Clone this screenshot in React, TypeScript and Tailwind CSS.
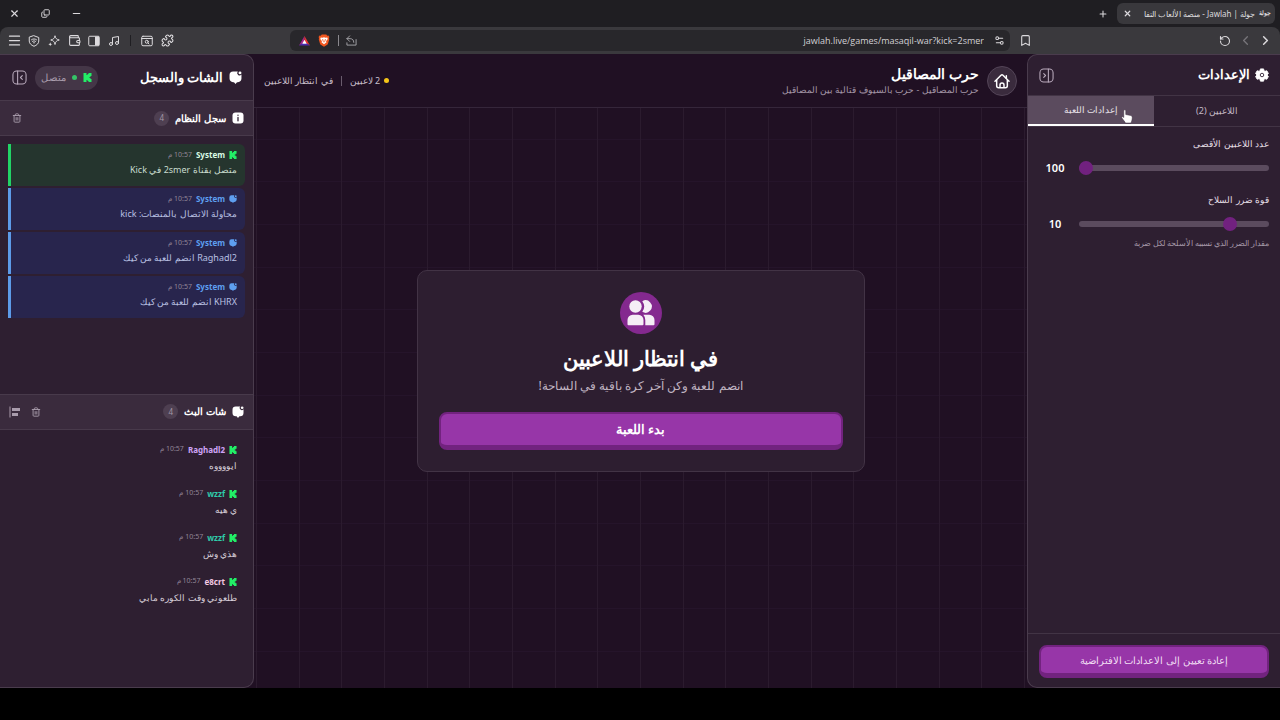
import React from "react";
import type { ReactNode } from "react";
import {
  Bookmark,
  ChevronLeft,
  ChevronRight,
  Copy,
  Menu,
  Minus,
  Music,
  Plus,
  Puzzle,
  RotateCcw,
  Settings2,
  Trash2,
  Wallet,
  X,
} from "lucide-react";

type SvgProps = { className?: string };

function KickIcon({ className }: SvgProps) {
  return (
    <svg viewBox="0 0 24 24" className={className} fill="#22ee66" aria-hidden="true">
      <path d="M1.333 0h8v5.333H12V2.667h2.667V0h8v8H20v2.667h-2.667v2.666H20V16h2.667v8h-8v-2.667H12v-2.666H9.333V24h-8Z" />
    </svg>
  );
}

function ChatIcon({ className }: SvgProps) {
  return (
    <svg viewBox="0 0 24 24" className={className} fill="currentColor" aria-hidden="true">
      <path d="M7.500 1h8.700a4.300 4.300 0 0 0 6.800 5.600V14a7 7 0 0 1-6.500 6.700h-1.700L12 23.800l-2.800-3.100H7.500A7 7 0 0 1 1 14V7.500A6.500 6.500 0 0 1 7.500 1Z" />
      <circle cx="20.300" cy="3.500" r="2.700" />
    </svg>
  );
}

function GearIcon({ className }: SvgProps) {
  return (
    <svg viewBox="0 0 24 24" className={className} fill="currentColor" aria-hidden="true">
      <path d="M9.300 1.500h5.400l.8 3.300 1.500.9 3.300-1 2.700 4.700L20.600 12l2.400 2.600-2.700 4.700-3.300-1-1.500.9-.8 3.300H9.300l-.8-3.300-1.500-.9-3.300 1L1 14.600 3.400 12 1 9.400l2.700-4.700 3.300 1 1.500-.9Z" stroke="currentColor" strokeWidth="1.500" strokeLinejoin="round" />
      <circle cx="12" cy="12" r="3" fill="none" stroke="#2e1f31" strokeWidth="1.500" />
    </svg>
  );
}

function PanelIcon({ className, side }: SvgProps & { side: "left" | "right" }) {
  return (
    <svg viewBox="0 0 24 24" className={className} fill="none" stroke="currentColor" strokeWidth="1.700" strokeLinecap="round" strokeLinejoin="round" aria-hidden="true">
      <rect x="1.500" y="1.500" width="21" height="21" rx="6" />
      {side === "left" ? <path d="M9 1.500v21M16.500 9l-3 3 3 3" /> : <path d="M15 1.500v21M7.500 9l3 3-3 3" />}
    </svg>
  );
}

function UsersIcon({ className }: SvgProps) {
  return (
    <svg viewBox="0 0 28 26" className={className} fill="currentColor" aria-hidden="true">
      <circle cx="8.500" cy="6.500" r="6.200" />
      <path d="M15.300 1.200a6.200 6.200 0 1 1 0 10.600 9 9 0 0 0 0-10.600Z" />
      <path d="M.500 20a5.200 5.200 0 0 1 5.200-5.200h5.600a5.200 5.200 0 0 1 5.200 5.200v4.300a1 1 0 0 1-1 1H1.500a1 1 0 0 1-1-1Z" />
      <path d="M16.300 14.800h6A5.200 5.200 0 0 1 27.500 20v4.300a1 1 0 0 1-1 1h-8.200V20a7.500 7.500 0 0 0-2-5.200Z" />
    </svg>
  );
}

function HomeIcon({ className }: SvgProps) {
  return (
    <svg viewBox="0 0 24 24" className={className} fill="none" stroke="currentColor" strokeWidth="2.200" strokeLinecap="round" strokeLinejoin="round" aria-hidden="true">
      <path d="M1.500 12.500 10.500 3.400a2.200 2.200 0 0 1 3 0l9 9.100" />
      <path d="M4 10.500V19a3 3 0 0 0 3 3h10a3 3 0 0 0 3-3v-8.500M18.500 8V4" />
      <path d="M9 21.500V18a3 3 0 0 1 6 0v3.500" />
    </svg>
  );
}

function InfoIcon({ className }: SvgProps) {
  return (
    <svg viewBox="0 0 24 24" className={className} fill="currentColor" aria-hidden="true">
      <rect x="1" y="1" width="22" height="22" rx="6" />
      <path d="M12 11v6.500M12 6.500v.200" stroke="#2e1f31" strokeWidth="2.600" strokeLinecap="round" />
    </svg>
  );
}

function AlignIcon({ className }: SvgProps) {
  return (
    <svg viewBox="0 0 24 24" className={className} fill="currentColor" aria-hidden="true">
      <path d="M1 1h2v22H1zM6 4h16v6H6zM6 14h12v6H6z" />
    </svg>
  );
}

function SidebarIcon({ className }: SvgProps) {
  return (
    <svg viewBox="0 0 24 24" className={className} fill="none" stroke="currentColor" strokeWidth="2" aria-hidden="true">
      <rect x="1.500" y="2.500" width="21" height="19" rx="2" />
      <path d="M14 3h8v18h-8z" fill="currentColor" stroke="none" />
    </svg>
  );
}

function SparkleIcon({ className }: SvgProps) {
  return (
    <svg viewBox="0 0 24 24" className={className} fill="none" stroke="currentColor" strokeWidth="2" strokeLinejoin="round" aria-hidden="true">
      <path d="M14 1.500c.8 5 3 7.200 8.500 8.500-5.500 1.300-7.700 3.500-8.500 9-.8-5.500-3-7.700-8.500-9C11 8.700 13.200 6.500 14 1.500Z" />
      <path d="M4.500 14.500c.5 2.500 1.500 3.500 4 4-2.500.5-3.500 1.500-4 4-.5-2.500-1.500-3.500-4-4 2.500-.5 3.500-1.500 4-4Z" fill="currentColor" stroke="none" />
    </svg>
  );
}

function ShieldWifiIcon({ className }: SvgProps) {
  return (
    <svg viewBox="0 0 24 24" className={className} fill="none" stroke="currentColor" strokeWidth="2" strokeLinejoin="round" strokeLinecap="round" aria-hidden="true">
      <path d="M12 1.500 21.500 5v7c0 5-4 8.500-9.500 10.500C6.500 20.500 2.500 17 2.500 12V5Z" />
      <path d="M7 9.500c3-2.200 7-2.200 10 0M9 12.700c2-1.300 4-1.300 6 0" />
      <path d="m12 15.500.010 0" strokeWidth="3" />
    </svg>
  );
}

function WindowSearchIcon({ className }: SvgProps) {
  return (
    <svg viewBox="0 0 24 24" className={className} fill="none" stroke="currentColor" strokeWidth="2" strokeLinejoin="round" strokeLinecap="round" aria-hidden="true">
      <rect x="1.500" y="2.500" width="21" height="19" rx="2.500" />
      <path d="M1.500 7h21" />
      <circle cx="11.500" cy="13.500" r="3" />
      <path d="m14 16 2 2" />
    </svg>
  );
}

function BraveIcon({ className }: SvgProps) {
  return (
    <svg viewBox="0 0 24 26" className={className} aria-hidden="true">
      <path d="M7.500 1h9l2 2.300 2.500-.3 1.800 3.200-.9 2.300.6 2-2.400 8.500c-.4 1.400-1.300 2.300-2.400 3L12 25.500 6.300 22c-1.100-.7-2-1.600-2.400-3L1.500 10.500l.6-2-.9-2.300L3 3l2.500.3Z" fill="#f0561f" />
      <path d="m5.500 7 3.500.5 3-.8 3 .8 3.500-.5 1 3-3.500 4.500 1 2L12 20.500l-5-4 1-2L4.500 10Z" fill="#fff" />
      <path d="m8 10 2.500 1 .5 4 1 1 1-1 .5-4L16 10l-2 5.500-2 1.500-2-1.500Z" fill="#f0561f" />
    </svg>
  );
}

function RewardsIcon({ className }: SvgProps) {
  return (
    <svg viewBox="0 0 24 22" className={className} aria-hidden="true">
      <path d="M12 0 0 21l12-7Z" fill="#a3278f" />
      <path d="m12 0 12 21-12-7Z" fill="#e8322f" />
      <path d="M0 21h24l-12-8Z" fill="#4a2bb0" />
      <path d="m12 8 5 9H7Z" fill="#fff" />
    </svg>
  );
}

function ReturnIcon({ className }: SvgProps) {
  return (
    <svg viewBox="0 0 24 24" className={className} fill="none" stroke="currentColor" strokeWidth="2" strokeLinejoin="round" strokeLinecap="round" aria-hidden="true">
      <path d="M8 2 2 8l6 6M2 8h7c5 0 8 3 8 8" />
      <path d="M2 17v5h20V10" />
    </svg>
  );
}

function HandCursor({ className }: SvgProps) {
  return (
    <svg viewBox="0 0 24 28" className={className} fill="#fff" stroke="#3a2b3d" strokeWidth="1" strokeLinejoin="round" aria-hidden="true">
      <path d="M5.500 2.500a2 2 0 0 1 4 0V10l10 2a3.500 3.500 0 0 1 3 3.500c0 5-1 7.500-2.500 11.500H9C7 23 3.500 20 1.500 16.500c-.6-1.500 1-2.700 2.300-1.800L5.500 16Z" />
    </svg>
  );
}

function IconButton({ label, className, children }: { label: string; className?: string; children: ReactNode }) {
  return (
    <button type="button" aria-label={label} className={`flex shrink-0 items-center justify-center ${className ?? ""}`}>
      {children}
    </button>
  );
}

function BrowserChrome() {
  return (
    <header className="shrink-0 bg-[#1f1e22] text-[#dcdadd]">
      <div className="flex h-[27px] items-center justify-between pr-[5px] pl-2">
        <div className="flex items-center gap-2">
          <div className="flex h-[21px] w-[158px] items-center justify-between rounded-md bg-[#39383c] px-1 text-[8px] whitespace-nowrap">
            <span className="flex items-center gap-1">
              <span className="w-3 text-center text-[6px] font-bold">جولة</span>
              <span>جولة | Jawlah - منصة الألعاب التفا</span>
            </span>
            <IconButton label="إغلاق التبويب" className="size-3">
              <X className="size-[9px]" strokeWidth={3.2} />
            </IconButton>
          </div>
          <IconButton label="تبويب جديد" className="size-3">
            <Plus className="size-[10px]" strokeWidth={2.5} />
          </IconButton>
        </div>
        <div className="flex items-center gap-[19px]">
          <IconButton label="تصغير" className="size-3">
            <Minus className="size-[11px]" strokeWidth={2.5} />
          </IconButton>
          <IconButton label="استعادة" className="size-3">
            <Copy className="size-[9px] -scale-y-100" strokeWidth={2.5} />
          </IconButton>
          <IconButton label="إغلاق" className="size-3">
            <X className="size-[11px]" strokeWidth={2.5} />
          </IconButton>
        </div>
      </div>

      <div className="flex h-[27px] items-center rounded-t-lg bg-[#3a393d] pr-[9px] pl-2">
        <div className="flex items-center gap-2">
          <IconButton label="رجوع" className="size-3">
            <ChevronRight className="size-[15px] shrink-0" strokeWidth={2.4} />
          </IconButton>
          <IconButton label="تقدم" className="size-3 text-[#78767b]">
            <ChevronLeft className="size-[15px] shrink-0" strokeWidth={2} />
          </IconButton>
          <IconButton label="إعادة تحميل" className="size-3">
            <RotateCcw className="size-3" strokeWidth={2.2} />
          </IconButton>
        </div>
        <IconButton label="إشارة مرجعية" className="mr-[188px] size-3">
          <Bookmark className="size-[13px] shrink-0" strokeWidth={2} />
        </IconButton>
        <div className="mx-[9px] flex h-[21px] min-w-0 flex-1 items-center rounded-md bg-[#28272b] pr-[5px] pl-2">
          <IconButton label="معلومات الموقع" className="size-3">
            <Settings2 className="size-[11px]" strokeWidth={2.2} />
          </IconButton>
          <input
            dir="ltr"
            aria-label="شريط العنوان"
            readOnly
            value="jawlah.live/games/masaqil-war?kick=2smer"
            className="mr-[9px] min-w-0 flex-1 bg-transparent text-right text-[9px] text-[#d2d0d4] outline-none [font-family:'Open_Sans',sans-serif]"
          />
          <div className="flex items-center gap-[6px]">
            <IconButton label="مشاركة" className="size-3 text-[#a9a7ac]">
              <ReturnIcon className="size-[11px]" />
            </IconButton>
            <span className="h-[11px] w-px bg-[#8a888d]" />
            <IconButton label="الدروع" className="size-4">
              <BraveIcon className="h-[13px] w-3" />
            </IconButton>
            <IconButton label="المكافآت" className="size-3">
              <RewardsIcon className="h-[10px] w-[11px]" />
            </IconButton>
          </div>
        </div>
        <div className="mr-[108px] flex items-center gap-2">
          <IconButton label="الإضافات" className="size-3">
            <Puzzle className="size-[13px] shrink-0" strokeWidth={2} />
          </IconButton>
          <IconButton label="بحث في التبويبات" className="size-3">
            <WindowSearchIcon className="size-3" />
          </IconButton>
          <span className="mx-[2px] h-[11px] w-px bg-[#1f1e22]" />
          <IconButton label="الوسائط" className="size-3">
            <Music className="size-3" strokeWidth={2} />
          </IconButton>
          <IconButton label="الشريط الجانبي" className="size-3">
            <SidebarIcon className="size-3" />
          </IconButton>
          <IconButton label="المحفظة" className="size-3">
            <Wallet className="size-[13px] shrink-0" strokeWidth={2} />
          </IconButton>
          <IconButton label="المساعد" className="size-3">
            <SparkleIcon className="size-3" />
          </IconButton>
          <IconButton label="الشبكة الخاصة" className="size-3">
            <ShieldWifiIcon className="size-3" />
          </IconButton>
          <IconButton label="القائمة" className="size-3">
            <Menu className="size-[15px] shrink-0" strokeWidth={2} />
          </IconButton>
        </div>
      </div>
    </header>
  );
}

function PrimaryButton({ children, className }: { children: ReactNode; className: string }) {
  return (
    <button type="button" className={`w-full rounded-lg border-2 border-b-[5px] border-[#72237f] bg-[#9736a8] ${className}`}>
      {children}
    </button>
  );
}

function Slider({ id, label, min, max, value, hint }: { id: string; label: string; min: number; max: number; value: number; hint?: string }) {
  return (
    <div>
      <label htmlFor={id} className="block text-[9px] leading-[14px] text-[#e6dfe7]">
        {label}
      </label>
      <div className="mt-2 flex h-[18px] items-center gap-2">
        <input
          id={id}
          type="range"
          min={min}
          max={max}
          defaultValue={value}
          className="h-[6px] min-w-0 flex-1 appearance-none rounded-full bg-[#5b4b5e] [&::-webkit-slider-thumb]:size-[14px] [&::-webkit-slider-thumb]:appearance-none [&::-webkit-slider-thumb]:rounded-full [&::-webkit-slider-thumb]:bg-[#71217f]"
        />
        <output htmlFor={id} className="w-8 text-center text-[11px] font-semibold">
          {value}
        </output>
      </div>
      {hint && <p className="mt-1 text-[8px] leading-3 text-[#a497a7]">{hint}</p>}
    </div>
  );
}

function SettingsPanel() {
  return (
    <aside className="flex w-[253px] shrink-0 flex-col rounded-l-[10px] border-y border-l border-[#4a3c4d] bg-[#2e1f31]">
      <div className="flex h-10 items-center justify-between pr-[11px] pl-[10px]">
        <h2 className="flex items-center gap-[5px] text-[13px] font-bold">
          <GearIcon className="size-[14px]" />
          الإعدادات
        </h2>
        <IconButton label="طي الإعدادات" className="size-4 text-[#b9aabc]">
          <PanelIcon side="right" className="size-[15px]" />
        </IconButton>
      </div>
      <div role="tablist" className="grid h-8 grid-cols-2 border-y border-[#423445] text-[9px]">
        <button type="button" role="tab" aria-selected="false" className="text-[#c5bac7]">
          اللاعبين (2)
        </button>
        <button type="button" role="tab" aria-selected="true" className="relative border-b-2 border-white bg-[#5b4b5e] text-[#e8e1e9]">
          إعدادات اللعبة
          <HandCursor className="absolute right-[21px] bottom-0 h-[15px] w-3" />
        </button>
      </div>
      <div className="flex flex-1 flex-col gap-4 px-[11px] pt-[10px]">
        <Slider id="max-players" label="عدد اللاعبين الأقصى" min={2} max={100} value={100} />
        <Slider id="weapon-damage" label="قوة ضرر السلاح" min={1} max={50} value={10} hint="مقدار الضرر الذي تسببه الأسلحة لكل ضربة" />
      </div>
      <div className="border-t border-[#423445] px-[11px] pt-[11px] pb-[9px]">
        <PrimaryButton className="h-[33px] text-[10px] text-[#f0dcf3]">إعادة تعيين إلى الاعدادات الافتراضية</PrimaryButton>
      </div>
    </aside>
  );
}

function GameStage() {
  return (
    <main className="flex min-w-0 flex-1 flex-col bg-[#201023] bg-[repeating-linear-gradient(to_right,transparent_0_2px,#2b1b2e_2px_3px,transparent_3px_45px,#2b1b2e_45px_46px,transparent_46px_87px,#2b1b2e_87px_88px,transparent_88px_128px),repeating-linear-gradient(to_bottom,transparent_0_42px,#25142a_42px_43px,transparent_43px_85px,#25142a_85px_86px,transparent_86px_127px,#25142a_127px_128px)]">
      <div className="flex h-[54px] shrink-0 items-center justify-between border-b border-[#35263a] bg-[#201023] px-[10px]">
        <div className="flex items-center gap-2">
          <a href="#home" aria-label="الرئيسية" className="flex size-[30px] items-center justify-center rounded-full border border-[#534457] bg-[#3a2b3d]">
            <HomeIcon className="size-4" />
          </a>
          <div>
            <h1 className="text-[14px] leading-[18px] font-bold">حرب المصاقيل</h1>
            <p className="text-[9px] leading-[14px] text-[#a497a7]">حرب المصاقيل - حرب بالسيوف قتالية بين المصاقيل</p>
          </div>
        </div>
        <div className="flex items-center gap-2 text-[9px] text-[#c9bfcb]">
          <span className="flex items-center gap-1">
            <span className="size-[5px] rounded-full bg-[#f5c518]" />2 لاعبين
          </span>
          <span className="h-[10px] w-px bg-[#6a5c6d]" />
          <span>في انتظار اللاعبين</span>
        </div>
      </div>
      <div className="flex flex-1 items-center justify-center px-4 pb-[54px]">
        <section className="flex w-full max-w-md flex-col items-center rounded-[10px] border border-[#423345] bg-[#2d1e30] p-[21px]">
          <span className="flex size-[42px] items-center justify-center rounded-full bg-[#84298f]">
            <UsersIcon className="h-[26px] w-7 text-[#f5eef6]" />
          </span>
          <h2 className="mt-[10px] text-[21px] leading-7 font-bold">في انتظار اللاعبين</h2>
          <p className="mt-[6px] text-[12px] leading-4 text-[#c0b4c2]">انضم للعبة وكن آخر كرة باقية في الساحة!</p>
          <PrimaryButton className="mt-[18px] h-[38px] text-[13px] font-semibold">بدء اللعبة</PrimaryButton>
        </section>
      </div>
    </main>
  );
}

type Message = { name: string; nameClass: string; text: string; rowClass: string; kick: boolean };

const systemLog: Message[] = [
  { name: "System", nameClass: "text-[#d9fbe5]", text: "متصل بقناة 2smer في Kick", rowClass: "border-[#22d366] bg-[#25352e] text-[#c9dccf]", kick: true },
  { name: "System", nameClass: "text-[#5e9ff0]", text: "محاولة الاتصال بالمنصات: kick", rowClass: "border-[#5d9be8] bg-[#28254d] text-[#b9c0e2]", kick: false },
  { name: "System", nameClass: "text-[#5e9ff0]", text: "Raghadl2 انضم للعبة من كيك", rowClass: "border-[#5d9be8] bg-[#28254d] text-[#b9c0e2]", kick: false },
  { name: "System", nameClass: "text-[#5e9ff0]", text: "KHRX انضم للعبة من كيك", rowClass: "border-[#5d9be8] bg-[#28254d] text-[#b9c0e2]", kick: false },
];

const streamChat: Message[] = [
  { name: "Raghadl2", nameClass: "text-[#cfa3f5]", text: "ايووووه", rowClass: "border-transparent text-[#d8cfda]", kick: true },
  { name: "wzzf", nameClass: "text-[#2fcbaa]", text: "ي هيه", rowClass: "border-transparent text-[#d8cfda]", kick: true },
  { name: "wzzf", nameClass: "text-[#2fcbaa]", text: "هذي وش", rowClass: "border-transparent text-[#d8cfda]", kick: true },
  { name: "e8crt", nameClass: "text-[#f3c9e2]", text: "طلعوني وقت الكوره مابي", rowClass: "border-transparent text-[#d8cfda]", kick: true },
];

function MessageList({ items, relaxed }: { items: Message[]; relaxed?: boolean }) {
  return (
    <ul className="flex flex-1 flex-col gap-[2px] px-2 pt-2">
      {items.map((m, i) => (
        <li key={i} className={`h-[42px] rounded-r-md border-l-[3px] pt-1 pr-2 ${m.rowClass}`}>
          <div className={`flex items-center gap-1 text-[8px] ${relaxed ? "h-4" : "h-[14px]"}`}>
            {m.kick ? <KickIcon className="size-2" /> : <ChatIcon className="size-2 text-[#5e9ff0]" />}
            <span className={`font-bold ${m.nameClass}`}>{m.name}</span>
            <time className="text-[7px] text-[#938697]">10:57 م</time>
          </div>
          <p className="text-[9px] leading-4">{m.text}</p>
        </li>
      ))}
    </ul>
  );
}

function SectionHeader({ icon, title, count, actions }: { icon: ReactNode; title: string; count: number; actions: ReactNode }) {
  return (
    <div className="flex h-9 shrink-0 items-center justify-between border-y border-[#483a4b] bg-[#3a2b3d] px-[9px]">
      <h3 className="flex items-center gap-[6px] text-[10px] font-bold">
        {icon}
        {title}
        <span className="flex size-[15px] items-center justify-center rounded-full bg-[#4e3f51] text-[8px] font-normal text-[#a497a7]">{count}</span>
      </h3>
      <div className="flex items-center gap-[9px] text-[#a99cac]">{actions}</div>
    </div>
  );
}

function ChatPanel() {
  return (
    <aside className="flex w-[254px] shrink-0 flex-col rounded-r-[10px] border-y border-r border-[#4a3c4d] bg-[#2e1f31]">
      <div className="flex h-[45px] shrink-0 items-center justify-between px-[11px]">
        <h2 className="flex items-center gap-[6px] text-[13px] font-bold">
          <ChatIcon className="size-[13px]" />
          الشات والسجل
        </h2>
        <div className="flex items-center gap-2">
          <span className="flex h-6 items-center gap-1 rounded-full bg-[#443647] px-[6px] text-[10px] text-[#a99cac]">
            <KickIcon className="size-[9px]" />
            <span className="mx-[2px] size-[5px] rounded-full bg-[#35c467]" />
            متصل
          </span>
          <IconButton label="طي الشات" className="size-4 text-[#b9aabc]">
            <PanelIcon side="left" className="size-[15px]" />
          </IconButton>
        </div>
      </div>
      <SectionHeader
        icon={<InfoIcon className="size-3" />}
        title="سجل النظام"
        count={4}
        actions={
          <IconButton label="مسح السجل" className="size-4">
            <Trash2 className="size-[10px]" strokeWidth={2.2} />
          </IconButton>
        }
      />
      <MessageList items={systemLog} />
      <SectionHeader
        icon={<ChatIcon className="size-3" />}
        title="شات البث"
        count={4}
        actions={
          <>
            <IconButton label="مسح الشات" className="size-3">
              <Trash2 className="size-[10px]" strokeWidth={2.2} />
            </IconButton>
            <IconButton label="محاذاة" className="size-3">
              <AlignIcon className="size-3" />
            </IconButton>
          </>
        }
      />
      <MessageList items={streamChat} relaxed />
    </aside>
  );
}

export default function App() {
  return (
    <div dir="rtl" lang="ar" className="flex min-h-screen flex-col bg-black text-white [font-family:'Noto_Sans',sans-serif]">
      <BrowserChrome />
      <div className="flex flex-1 bg-[#201023]">
        <SettingsPanel />
        <GameStage />
        <ChatPanel />
      </div>
      <div className="h-8 shrink-0 bg-black" />
    </div>
  );
}
